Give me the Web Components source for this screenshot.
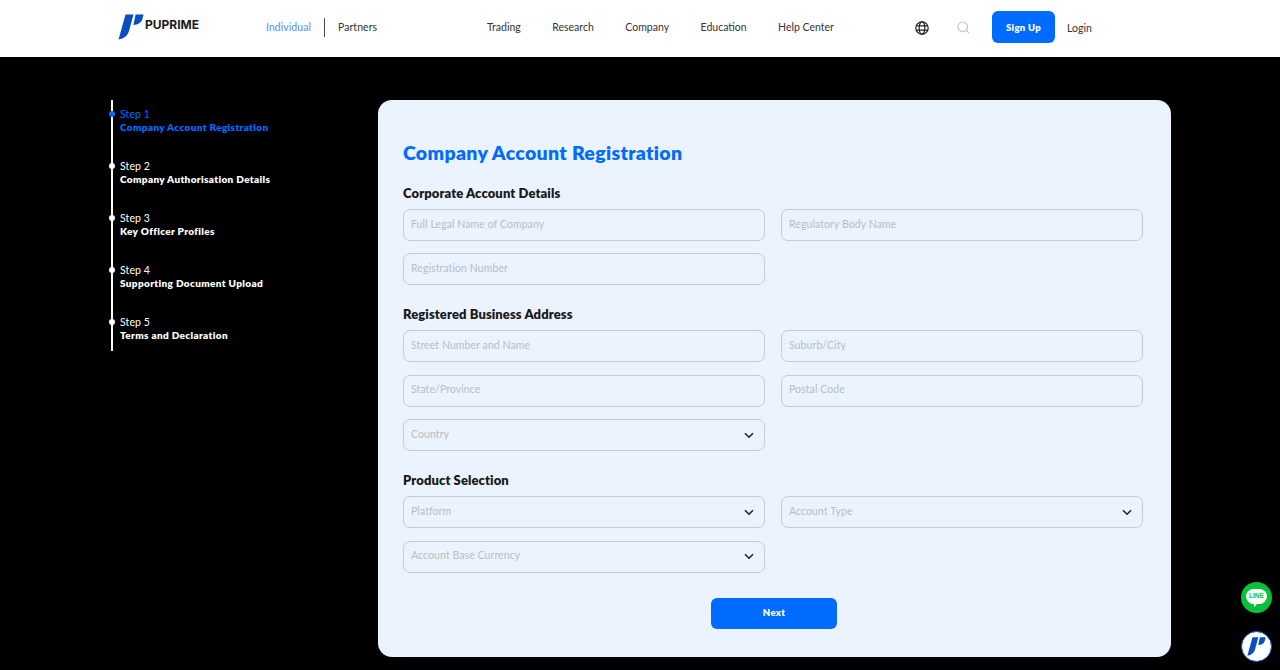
<!DOCTYPE html>
<html lang="en">
<head>
<meta charset="utf-8">
<title>PU Prime - Company Account Registration</title>
<style>
  html, body { margin: 0; height: 670px; overflow: hidden; background: #000; font-family: "Lato", sans-serif; }
  .layout { display: flex; align-items: flex-start; padding: 43px 0 0 111px; }
</style>
</head>
<body>
<site-header></site-header>
<div class="layout">
  <step-rail>
    <step-item label="Step 1" active>Company Account Registration</step-item>
    <step-item label="Step 2">Company Authorisation Details</step-item>
    <step-item label="Step 3">Key Officer Profiles</step-item>
    <step-item label="Step 4">Supporting Document Upload</step-item>
    <step-item label="Step 5">Terms and Declaration</step-item>
  </step-rail>
  <form-card heading="Company Account Registration">
    <form-section heading="Corporate Account Details">
      <form-field placeholder="Full Legal Name of Company"></form-field>
      <form-field placeholder="Regulatory Body Name"></form-field>
      <form-field placeholder="Registration Number"></form-field>
    </form-section>
    <form-section heading="Registered Business Address">
      <form-field placeholder="Street Number and Name"></form-field>
      <form-field placeholder="Suburb/City"></form-field>
      <form-field placeholder="State/Province"></form-field>
      <form-field placeholder="Postal Code"></form-field>
      <form-field placeholder="Country" select></form-field>
    </form-section>
    <form-section heading="Product Selection">
      <form-field placeholder="Platform" select></form-field>
      <form-field placeholder="Account Type" select></form-field>
      <form-field placeholder="Account Base Currency" select></form-field>
    </form-section>
  </form-card>
</div>
<chat-buttons></chat-buttons>

<script>
const LOGO_PATHS = `
  <path d="M7.5 .5H15.5L11 17C9.8 21.5 6.5 24.5 .5 25.5Z"/>
  <path d="M17.6 .5H25.6L24.4 5C23.2 9 20 10.6 15.4 11Z"/>`;

class SiteHeader extends HTMLElement {
  constructor() {
    super();
    this.attachShadow({ mode: 'open' });
    this.shadowRoot.innerHTML = `
      <style>
        :host { display: flex; align-items: center; height: 57px; background: #fff; color: #333; font: 400 10.5px "Lato", sans-serif; }
        a { color: inherit; text-decoration: none; white-space: nowrap; }
        .logo { display: flex; align-items: center; margin-left: 118px; width: 148px; }
        .logo svg { width: 26px; height: 26px; fill: #0a4fc0; margin: -3px 1px 0 0; }
        .logo span { font: 700 12px/1 "Inter", sans-serif; color: #1a1a1a; letter-spacing: 0; margin-top: -7px; }
        .audience { display: flex; align-items: center; width: 221px; margin-top: -3px; }
        .audience .on { color: #5b8df0; padding-right: 13px; border-right: 1px solid #444; line-height: 19px; letter-spacing: .05px; }
        .audience .off { padding-left: 13px; letter-spacing: .05px; }
        nav { display: flex; gap: 31.5px; width: 427px; margin-top: -3px; }
        .tools { display: flex; align-items: center; margin: -2px 0 0 1px; }
        .tools svg { display: block; }
        .search { margin: 0 22px 0 28px; }
        .signup { display: flex; align-items: center; justify-content: center; width: 63px; height: 32px; border-radius: 6px; background: #006bff; color: #fff; font: 800 9.5px "Lato", sans-serif; letter-spacing: .3px; margin-top: -1px; }
        .login { margin-left: 12px; }
      </style>
      <a class="logo" href="#">
        <svg viewBox="0 0 26 26">${LOGO_PATHS}</svg>
        <span>PUPRIME</span>
      </a>
      <div class="audience"><a class="on" href="#">Individual</a><a class="off" href="#">Partners</a></div>
      <nav>
        <a href="#">Trading</a><a href="#">Research</a><a href="#">Company</a><a href="#">Education</a><a href="#">Help Center</a>
      </nav>
      <div class="tools">
        <svg width="14" height="14" viewBox="0 0 14 14" fill="none" stroke="#222" stroke-width="1.2">
          <circle cx="7" cy="7" r="6.2"/><ellipse cx="7" cy="7" rx="2.8" ry="6.2"/><path d="M1.2 4.8H12.8M1.2 9.2H12.8"/>
        </svg>
        <svg class="search" width="13" height="13" viewBox="0 0 13 13" fill="none" stroke="#c4c4c4" stroke-width="1.2">
          <circle cx="5.8" cy="5.8" r="4.8"/><path d="M9.4 9.4L12 12"/>
        </svg>
        <a class="signup" href="#">Sign Up</a>
        <a class="login" href="#">Login</a>
      </div>`;
  }
}
customElements.define('site-header', SiteHeader);

class StepRail extends HTMLElement {
  constructor() {
    super();
    this.attachShadow({ mode: 'open' });
    this.shadowRoot.innerHTML = `
      <style>
        :host { display: flex; flex-direction: column; gap: 26px; box-sizing: border-box; width: 267px; height: 251px; padding-top: 7.5px; border-left: 2px solid #fff; flex: none; }
      </style>
      <slot></slot>`;
  }
}
customElements.define('step-rail', StepRail);

class StepItem extends HTMLElement {
  static get observedAttributes() { return ['label']; }
  constructor() {
    super();
    this.attachShadow({ mode: 'open' });
    this.shadowRoot.innerHTML = `
      <style>
        :host { display: block; position: relative; padding-left: 7px; height: 26px; color: #fff; }
        :host([active]) { color: #006bff; }
        .dot { position: absolute; left: -4px; top: 3.5px; width: 6px; height: 6px; border-radius: 50%; background: currentColor; }
        .label { font: 400 10.5px/13px "Lato", sans-serif; letter-spacing: .1px; }
        .title { font: 800 10px/13px "Lato", sans-serif; letter-spacing: .34px; white-space: nowrap; }
      </style>
      <span class="dot"></span>
      <div class="label"></div>
      <div class="title"><slot></slot></div>`;
  }
  attributeChangedCallback(name, old, value) {
    this.shadowRoot.querySelector('.label').textContent = value;
  }
}
customElements.define('step-item', StepItem);

class FormCard extends HTMLElement {
  constructor() {
    super();
    this.attachShadow({ mode: 'open' });
    this.shadowRoot.innerHTML = `
      <style>
        :host { display: block; box-sizing: border-box; width: 793px; height: 557px; padding: 38px 28px 0 25px; border-radius: 14px; background: #eaf3ff; flex: none; }
        h1 { margin: 0 0 15px; font: 800 19.5px/30px "Lato", sans-serif; color: #006bff; letter-spacing: .3px; }
        .actions { display: flex; justify-content: center; margin-top: 25px; padding-left: 2px; }
        button { width: 126px; height: 31px; padding: 0 0 2px; border: 0; border-radius: 6px; background: #006bff; color: #fff; font: 800 9.5px "Lato", sans-serif; letter-spacing: .3px; }
      </style>
      <h1></h1>
      <slot></slot>
      <div class="actions"><button type="button">Next</button></div>`;
    this.shadowRoot.querySelector('h1').textContent = this.getAttribute('heading');
  }
}
customElements.define('form-card', FormCard);

class FormSection extends HTMLElement {
  constructor() {
    super();
    this.attachShadow({ mode: 'open' });
    this.shadowRoot.innerHTML = `
      <style>
        :host { display: block; margin-bottom: 19px; }
        h2 { margin: 0 0 6px; font: 800 13px/20px "Lato", sans-serif; color: #1a1a1a; letter-spacing: .1px; }
        .grid { display: grid; grid-template-columns: 362px 362px; column-gap: 16px; row-gap: 12.4px; }
      </style>
      <h2></h2>
      <div class="grid"><slot></slot></div>`;
    this.shadowRoot.querySelector('h2').textContent = this.getAttribute('heading');
  }
}
customElements.define('form-section', FormSection);

class FormField extends HTMLElement {
  constructor() {
    super();
    this.attachShadow({ mode: 'open' });
    const chevron = this.hasAttribute('select')
      ? `<svg width="10" height="7" viewBox="0 0 10 7" fill="none" stroke="#222" stroke-width="1.6"><path d="M1 1.2L5 5.2L9 1.2"/></svg>`
      : '';
    this.shadowRoot.innerHTML = `
      <style>
        :host { display: flex; align-items: center; justify-content: space-between; box-sizing: border-box; height: 32px; padding: 0 10px 0 7px; border: 1px solid #c5cbd2; border-radius: 7px; }
        span { font: 400 10.5px "Lato", sans-serif; color: #b9bdc3; letter-spacing: .08px; margin-top: -3px; }
        svg { display: block; }
      </style>
      <span></span>${chevron}`;
    this.shadowRoot.querySelector('span').textContent = this.getAttribute('placeholder');
  }
}
customElements.define('form-field', FormField);

class ChatButtons extends HTMLElement {
  constructor() {
    super();
    this.attachShadow({ mode: 'open' });
    this.shadowRoot.innerHTML = `
      <style>
        :host { position: fixed; left: 1241px; top: 582px; display: flex; flex-direction: column; gap: 18px; }
        a { display: flex; align-items: center; justify-content: center; width: 31px; height: 31px; border-radius: 50%; text-decoration: none; }
        .line { background: #06c13a; }
        .brand { background: #fff; box-sizing: border-box; border: 1px solid #0a4fc0; }
        .bubble { position: relative; display: flex; align-items: center; justify-content: center; width: 21px; height: 15px; margin-top: -3px; border-radius: 7.5px; background: #fff; color: #06c13a; font: 700 6.5px/1 "Liberation Sans", sans-serif; }
        .bubble::after { content: ""; position: absolute; left: 8px; top: 14px; border: 2.5px solid transparent; border-top-color: #fff; border-left-color: #fff; }
        svg { width: 19px; height: 19px; fill: #0a4fc0; }
      </style>
      <a class="line" href="#"><span class="bubble">LINE</span></a>
      <a class="brand" href="#"><svg viewBox="0 0 26 26">${LOGO_PATHS}</svg></a>`;
  }
}
customElements.define('chat-buttons', ChatButtons);
</script>
</body>
</html>
